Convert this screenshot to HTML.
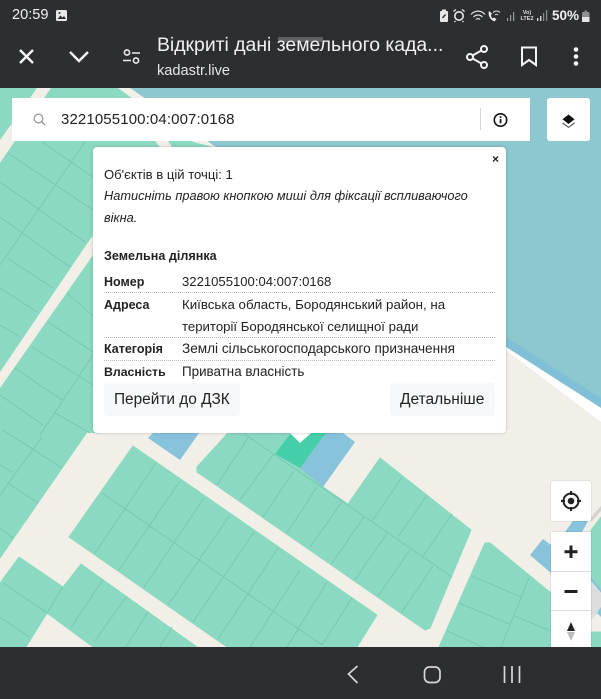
<!DOCTYPE html>
<html lang="uk">
<head>
<meta charset="utf-8">
<title>kadastr.live</title>
<style>
html,body{margin:0;padding:0;background:#2d2e32}
#r{position:relative;width:601px;height:699px;overflow:hidden;background:#2d2e32;font-family:"Liberation Sans",sans-serif}
.t{position:absolute;white-space:nowrap;line-height:1}
.p{color:#222;font-size:13.2px}
.b{font-weight:bold;font-size:12.5px}
.d{position:absolute;left:11px;width:391px;border-top:1px dotted #bbb;height:0}
.box{position:absolute;background:#fff}
svg{position:absolute;left:0;top:0}
</style>
</head>
<body>
<div id="r">
<svg width="601" height="699" viewBox="0 0 601 699">
<rect x="0" y="88" width="601" height="559" fill="#f2efe9"/>
<polygon points="130,88 601,88 601,408 506,347 213,145" fill="#8cc8ce"/>
<polygon points="506,337 601,398 601,408 506,347" fill="#7fc0d6"/>
<polygon points="506,347 601,408 601,422 506,350" fill="#ffffff"/>
<g fill="#8bd9c1" stroke="#8bd9c1" stroke-width="1" stroke-linejoin="round">
<polygon points="0,88 118,88 193,142 213,147 100,433 87,432 0,558"/>
<polygon points="228,433 197,467 197,472 425,630 430,628 471,530 380,458 348,504 323,487 290,433"/>
<polygon points="133,446 377,615 357,647 227,647 69,537"/>
<polygon points="19,557 63,587 81,564 197,647 93,647 47,613 26,647 0,647 0,583"/>
<polygon points="485,543 490,543 551,593 551,647 439,647"/>
<polygon points="591,530 601,517 601,592 591,580"/>
<rect x="591" y="632" width="10" height="15"/>
</g>
<polygon points="118,88 130,88 213,147 193,142" fill="#f2efe9"/>
<polygon points="37,88 51,88 0,163 0,140" fill="#f2efe9"/>
<polygon points="93,235 93,255 0,388 0,372" fill="#f2efe9"/>
<polygon points="155,141 168,141 172,147 160,147" fill="#f2efe9"/>
<polygon points="148,438 153,433 199,433 180,460" fill="#87c3da"/>
<polygon points="323,487 355,442 343,433 326,433 300,468" fill="#87c3da"/>
<polygon points="275,454 291,433 326,433 300,468" fill="#45cfa8"/>
<polygon points="565,532 573,521 588,521 582,532" fill="#87c3da"/>
<polygon points="530,555 543,539 551,545 551,573" fill="#87c3da"/>
<polygon points="591,582 601,594 601,608 597,614 591,620" fill="#dcdcdc"/>
<polygon points="591,577 601,589 601,593 591,581" fill="#87c3da"/>
<polygon points="597,613 601,607 601,617" fill="#87c3da"/>
<polygon points="588,521 601,506 601,511 592,521" fill="#d2d2d0"/>
<g stroke="#72c5ad" stroke-width="0.8" fill="none">
<path d="M42 142L93 177M8 153L93 210M0 182L85 242M0 217L70 267M7 258L53 288M0 288L37 312M0 325L20 337M67 293L93 316M48 322L93 352M32 347L93 385M15 368L62 400M0 395L43 425M55 413L90 433M85 142L0 265M93 355L40 435"/>
<path d="M3 430L62 468M42 437L0 495M0 465L12 472M8 483L38 503M0 528L13 538"/>
<path d="M243 433L452 577M248 438L217 485M273 455L240 500M293 472L263 517M317 487L287 533M342 502L310 547M364 517L332 563M387 533L355 580M410 550L378 596M433 566L401 613M402 477L373 520M427 495L398 537M452 514L423 556"/>
<path d="M102 493L322 645M156 463L95 553M180 481L119 570M204 498L144 587M230 515L168 605M254 532L193 622M278 548L218 639M300 570L250 647M327 582L287 647M352 598L322 645"/>
<path d="M3 583L47 613L63 587M0 617L29 637M103 580L71 627M127 596L94 642M148 612L126 647M172 627L160 647"/>
<path d="M472 576L521 597M459 603L509 624M447 631L483 647M529 578L501 647M515 616L551 631"/>
</g>
<polygon points="290,433 311,433 300,443" fill="#fff"/>
</svg>

<!-- search -->
<div class="box" style="left:12px;top:98px;width:518px;height:43px"></div>
<div class="box" style="left:547px;top:98px;width:43px;height:43px;border-radius:3px"></div>
<div class="t" style="left:61px;top:112px;font-size:15px;color:#222;letter-spacing:.12px">3221055100:04:007:0168</div>
<div style="position:absolute;left:480px;top:108px;width:1px;height:22px;background:#d6d6d6"></div>

<!-- popup -->
<div class="box" style="left:93px;top:147px;width:413px;height:286px;border-radius:4px;box-shadow:0 0 3px rgba(0,0,0,.2)">
<div class="t" style="left:399px;top:6px;font-size:12px;font-weight:bold;color:#222">×</div>
<div class="t p" style="left:11px;top:21px;font-size:13.1px">Об'єктів в цій точці: 1</div>
<div class="t p" style="left:11px;top:43px;font-size:12.8px;font-style:italic">Натисніть правою кнопкою миші для фіксації вспливаючого</div>
<div class="t p" style="left:11px;top:65px;font-size:12.8px;font-style:italic">вікна.</div>
<div class="t p b" style="left:11px;top:103px;font-size:12.6px">Земельна ділянка</div>
<div class="t p b" style="left:11px;top:129px">Номер</div>
<div class="t p" style="left:89px;top:128px;font-size:13.1px">3221055100:04:007:0168</div>
<div class="d" style="top:145px"></div>
<div class="t p b" style="left:11px;top:152px">Адреса</div>
<div class="t p" style="left:89px;top:151px;font-size:13.3px">Київська область, Бородянський район, на</div>
<div class="t p" style="left:89px;top:173px">території Бородянської селищної ради</div>
<div class="d" style="top:190px"></div>
<div class="t p b" style="left:11px;top:196px">Категорія</div>
<div class="t p" style="left:89px;top:195px;font-size:13.6px">Землі сільськогосподарського призначення</div>
<div class="d" style="top:213px"></div>
<div class="t p b" style="left:11px;top:219px;font-size:12.3px">Власність</div>
<div class="t p" style="left:89px;top:218px;font-size:13.4px">Приватна власність</div>
<div style="position:absolute;left:11px;top:236px;width:136px;height:33px;background:#f7f8f9;border-radius:4px"></div>
<div style="position:absolute;left:297px;top:236px;width:105px;height:33px;background:#f7f8f9;border-radius:4px"></div>
<div class="t" style="left:21px;top:245px;font-size:15.4px;color:#222">Перейти до ДЗК</div>
<div class="t" style="left:307px;top:245px;font-size:15.5px;color:#222">Детальніше</div>
</div>

<!-- map controls -->
<div class="box" style="left:551px;top:481px;width:40px;height:40px;border-radius:2px;box-shadow:0 0 1px rgba(0,0,0,.35)"></div>
<div class="box" style="left:551px;top:532px;width:40px;height:115px;box-shadow:0 0 1px rgba(0,0,0,.35)"></div>
<div style="position:absolute;left:551px;top:571px;width:40px;height:1px;background:#ddd"></div>
<div style="position:absolute;left:551px;top:610px;width:40px;height:1px;background:#ddd"></div>

<!-- top bar + bottom bar -->
<div style="position:absolute;left:0;top:0;width:601px;height:88px;background:#2d2e32"></div>
<div style="position:absolute;left:0;top:647px;width:601px;height:52px;background:#2d2e32"></div>
<div style="position:absolute;left:278px;top:37px;width:45px;height:5px;background:#5f6063;border-radius:1px"></div>
<div class="t" style="left:12px;top:8px;font-size:14.6px;color:#f0f0f0">20:59</div>
<div class="t" style="left:157px;top:36px;font-size:19.4px;color:#f1f1f1">Відкриті дані земельного када...</div>
<div class="t" style="left:157px;top:64px;font-size:14.6px;color:#e6e6e6">kadastr.live</div>
<div class="t b" style="left:552px;top:9px;font-size:13.5px;color:#efefef">50%</div>
<div class="t b" style="left:519px;top:10px;font-size:5.5px;color:#ddd;line-height:6px;text-align:center;white-space:normal;width:16px">Vo)<br>LTE2</div>

<svg width="601" height="699" viewBox="0 0 601 699">
<!-- gallery status icon -->
<rect x="56" y="10" width="11" height="11" rx="1.5" fill="#e8e8e8"/>
<path d="M57.5 19L60.5 15.5L62.5 17.5L64 16L66 19Z" fill="#2d2e32"/><circle cx="59.5" cy="13" r="1" fill="#2d2e32"/>
<!-- close, chevron, tune -->
<path d="M20 50L33 63M33 50L20 63" stroke="#f5f5f5" stroke-width="2.4" fill="none"/>
<path d="M70 52L79 61L88 52" stroke="#f5f5f5" stroke-width="2.4" fill="none"/>
<g stroke="#ededed" stroke-width="1.6" fill="none">
<circle cx="127" cy="52.5" r="2.6"/><path d="M132 53H140M123 60.5H131"/><circle cx="136" cy="60.5" r="2.6"/>
</g>
<!-- share, bookmark, more -->
<g stroke="#f5f5f5" stroke-width="2" fill="none">
<circle cx="484" cy="49" r="3"/><circle cx="470" cy="57" r="3"/><circle cx="484" cy="65" r="3"/>
<path d="M481.4 50.5L472.6 55.5M472.6 58.5L481.4 63.5"/>
<path d="M522 47.5H536V65L529 60L522 65Z"/>
</g>
<g fill="#f5f5f5"><circle cx="576" cy="49.5" r="2.3"/><circle cx="576" cy="56.5" r="2.3"/><circle cx="576" cy="63.5" r="2.3"/></g>
<!-- status right -->
<rect x="440" y="11" width="8" height="11" rx="1" fill="#e8e8e8"/><rect x="442" y="9.5" width="4" height="2" fill="#e8e8e8"/><path d="M442.5 18L445.5 14.5" stroke="#2d2e32" stroke-width="1.4"/>
<circle cx="459" cy="16" r="4.2" fill="none" stroke="#e8e8e8" stroke-width="1.6"/><path d="M453.5 11.5L456 9.5M464.5 11.5L462 9.5M455.5 21L454.5 22M462.5 21L463.5 22" stroke="#e8e8e8" stroke-width="1.3"/>
<g stroke="#e0e0e0" stroke-width="1.2" fill="none">
<path d="M471 14.5C475 10 481 10 485 14.5M473.5 17C476 14.3 480 14.3 482.5 17M476 19.5C477.2 18.3 478.8 18.3 480 19.5"/>
</g>
<path d="M489 11C487.5 14.5 490 20 494.5 21.5L496.5 19L494 17.5L492.5 18.5C491.5 17.5 491 16 491 15L492 13.5Z" fill="#e8e8e8"/>
<path d="M493 12.5C495 10.5 498 10.5 500 12.5M495 15C496 14 497 14 498 15" stroke="#ddd" stroke-width="1" fill="none"/>
<g fill="#9a9a9a"><rect x="507" y="18" width="1.2" height="3"/><rect x="510" y="15" width="1.2" height="6"/><rect x="513" y="12" width="1.2" height="9"/></g>
<g fill="#d8d8d8"><rect x="537" y="18" width="1.4" height="3"/><rect x="540" y="16" width="1.4" height="5"/></g>
<g fill="#8a8a8a"><rect x="543" y="13" width="1.2" height="8"/><rect x="546" y="10" width="1.2" height="11"/></g>
<rect x="582" y="12" width="7.5" height="10" rx="1" fill="#8f8f8f"/><rect x="582" y="17" width="7.5" height="5" fill="#e4e4e4"/><rect x="584.5" y="10.5" width="2.5" height="2" fill="#8f8f8f"/>
<!-- search icon -->
<circle cx="38.5" cy="118.5" r="4.3" fill="none" stroke="#9a9a9a" stroke-width="1.3"/><path d="M41.7 121.7L45 125" stroke="#9a9a9a" stroke-width="1.4"/>
<!-- info -->
<circle cx="500.5" cy="120" r="6.2" fill="none" stroke="#111" stroke-width="1.6"/><rect x="499.7" y="119" width="1.7" height="4.3" fill="#111"/><rect x="499.7" y="116.3" width="1.7" height="1.7" fill="#111"/>
<!-- layers -->
<path d="M568.5 114.5L574.5 119.2L568.5 124L562.5 119.2Z" fill="#111"/>
<path d="M563 122.5L568.5 126.8L574 122.5L575 123.3L568.5 128L562 123.3Z" fill="#111" opacity=".75"/>
<!-- locate -->
<circle cx="571" cy="501" r="7.5" fill="none" stroke="#222" stroke-width="2"/><circle cx="571" cy="501" r="3.3" fill="#222"/>
<path d="M571 491V495M571 507V511M561 501H565M577 501H581" stroke="#222" stroke-width="2"/>
<!-- plus / minus / compass -->
<path d="M571 545.5V558M564.5 551.7H577.5" stroke="#222" stroke-width="3"/>
<path d="M564.5 591.5H577.5" stroke="#222" stroke-width="3"/>
<polygon points="571,622 575,631 567,631" fill="#222"/>
<polygon points="571,641 575,632 567,632" fill="#bbb"/>
<!-- nav bar -->
<path d="M357.5 666L348.5 674L357.5 683" stroke="#d8d8d8" stroke-width="1.7" fill="none"/>
<rect x="424.5" y="667" width="15.5" height="15.5" rx="5" fill="none" stroke="#d8d8d8" stroke-width="1.7"/>
<path d="M504.5 666V683M512 666V683M519.5 666V683" stroke="#d8d8d8" stroke-width="1.7"/>
</svg>
</div>
</body>
</html>
